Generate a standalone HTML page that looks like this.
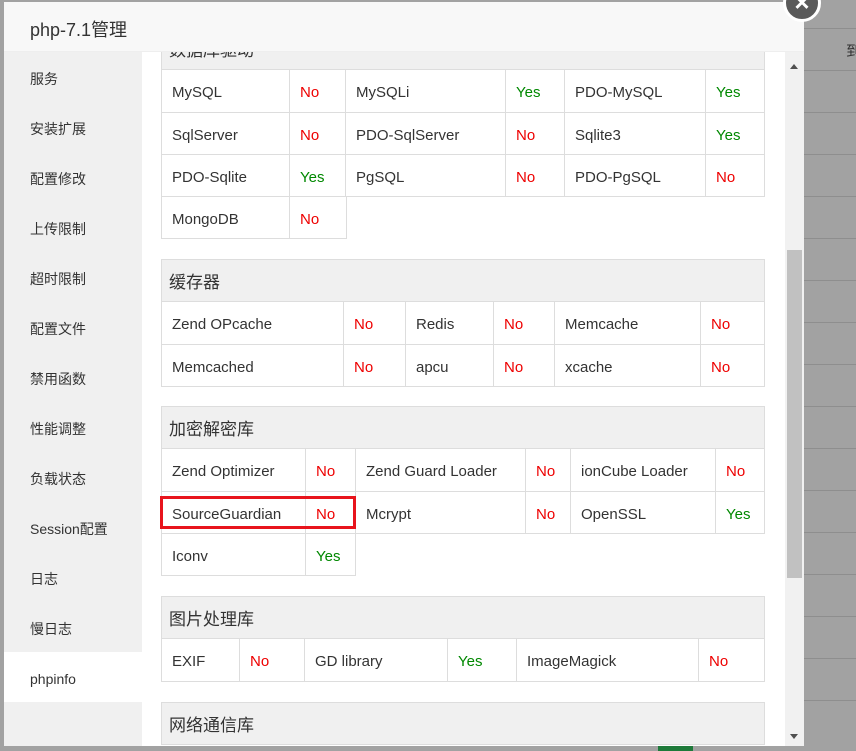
<!DOCTYPE html>
<html><head><meta charset="utf-8"><style>
*{margin:0;padding:0;box-sizing:border-box}
body{width:856px;height:751px;overflow:hidden;background:#a2a2a2;font-family:"Liberation Sans","Noto Sans CJK SC",sans-serif;position:relative}
.bgl{position:absolute;left:804px;right:0;height:1px;background:#8e8e8e}
.bgt{position:absolute;left:828px;color:#333;font-size:15px}
.modal{position:absolute;left:4px;top:2px;width:800px;height:744px;background:#fff;overflow:hidden}
.hd{height:50px;background:#f8f8f8;font-size:18px;color:#333;padding:14px 0 0 26px;border-bottom:1px solid #eee}
.side{position:absolute;left:0;top:50px;width:138px;height:694px;background:#f0f0f0}
.side div{height:50px;line-height:54px;padding-left:26px;font-size:14px;color:#333}
.side .on{background:#fff}
.content{position:absolute;left:138px;top:50px;width:643px;height:694px;overflow:hidden}
.sec{position:absolute;left:19px;width:604px}
.tt{height:43px;line-height:46px;background:#f0f0f0;border:1px solid #ddd;font-size:17px;color:#333;padding-left:7px}
table{border-collapse:collapse;font-size:15px;color:#333}
td{height:42px;border:1px solid #ddd;border-top:none;padding:4px 0 0 10px;white-space:nowrap}
.n{color:#e00}.y{color:#080}
.sb{position:absolute;left:781px;top:50px;width:19px;height:694px;background:#f1f1f1}
.th{position:absolute;left:2px;top:198px;width:15px;height:328px;background:#c1c1c1}
</style></head><body>
<div class="bgl" style="top:28px"></div><div class="bgl" style="top:70px"></div><div class="bgl" style="top:112px"></div><div class="bgl" style="top:154px"></div><div class="bgl" style="top:196px"></div><div class="bgl" style="top:238px"></div><div class="bgl" style="top:280px"></div><div class="bgl" style="top:322px"></div><div class="bgl" style="top:364px"></div><div class="bgl" style="top:406px"></div><div class="bgl" style="top:448px"></div><div class="bgl" style="top:490px"></div><div class="bgl" style="top:532px"></div><div class="bgl" style="top:574px"></div><div class="bgl" style="top:616px"></div><div class="bgl" style="top:658px"></div><div class="bgl" style="top:700px"></div>
<div class="bgt" style="top:40px;left:846px">到</div>
<div style="position:absolute;left:658px;top:746px;width:35px;height:5px;background:#1e7a3a"></div>
<div class="modal">
<div class="hd">php-7.1管理</div>
<div class="side"><div>服务</div><div>安装扩展</div><div>配置修改</div><div>上传限制</div><div>超时限制</div><div>配置文件</div><div>禁用函数</div><div>性能调整</div><div>负载状态</div><div>Session配置</div><div>日志</div><div>慢日志</div><div class="on">phpinfo</div></div>
<div class="content">
<div class="sec" style="top:-25px"><div class="tt">数据库驱动</div>
<table style="width:604px"><tr><td style="width:128px">MySQL</td><td class="n" style="width:56px">No</td><td style="width:160px">MySQLi</td><td class="y" style="width:59px">Yes</td><td style="width:141px">PDO-MySQL</td><td class="y">Yes</td></tr>
<tr><td>SqlServer</td><td class="n">No</td><td>PDO-SqlServer</td><td class="n">No</td><td>Sqlite3</td><td class="y">Yes</td></tr>
<tr><td>PDO-Sqlite</td><td class="y">Yes</td><td>PgSQL</td><td class="n">No</td><td>PDO-PgSQL</td><td class="n">No</td></tr></table>
<table><tr><td style="width:128px">MongoDB</td><td class="n" style="width:57px">No</td></tr></table></div>
<div class="sec" style="top:207px"><div class="tt">缓存器</div>
<table style="width:604px"><tr><td style="width:182px">Zend OPcache</td><td class="n" style="width:62px">No</td><td style="width:88px">Redis</td><td class="n" style="width:61px">No</td><td style="width:146px">Memcache</td><td class="n">No</td></tr>
<tr><td>Memcached</td><td class="n">No</td><td>apcu</td><td class="n">No</td><td>xcache</td><td class="n">No</td></tr></table></div>
<div class="sec" style="top:354px"><div class="tt">加密解密库</div>
<table style="width:604px"><tr><td style="width:144px">Zend Optimizer</td><td class="n" style="width:50px">No</td><td style="width:170px">Zend Guard Loader</td><td class="n" style="width:45px">No</td><td style="width:145px">ionCube Loader</td><td class="n">No</td></tr>
<tr><td>SourceGuardian</td><td class="n">No</td><td>Mcrypt</td><td class="n">No</td><td>OpenSSL</td><td class="y">Yes</td></tr></table>
<table><tr><td style="width:144px">Iconv</td><td class="y" style="width:50px">Yes</td></tr></table></div>
<div class="sec" style="top:544px"><div class="tt">图片处理库</div>
<table style="width:604px"><tr><td style="width:78px">EXIF</td><td class="n" style="width:65px">No</td><td style="width:143px">GD library</td><td class="y" style="width:69px">Yes</td><td style="width:182px">ImageMagick</td><td class="n">No</td></tr></table></div>
<div class="sec" style="top:650px"><div class="tt">网络通信库</div></div>
<div style="position:absolute;left:18px;top:444px;width:196px;height:33px;border:3px solid #e8141c"></div>
</div>
<div class="sb"><div style="position:absolute;left:5px;top:12px;border:4px solid transparent;border-bottom:5px solid #505050;border-top:none"></div><div class="th"></div><div style="position:absolute;left:5px;top:682px;border:4px solid transparent;border-top:5px solid #505050;border-bottom:none"></div></div>
</div>
<div style="position:absolute;left:783px;top:-16px;width:38px;height:38px;border-radius:50%;background:#5a5a5a;border:3px solid #fff;color:#fff;font-size:26px;line-height:30px;text-align:center;font-weight:bold">×</div>
</body></html>
